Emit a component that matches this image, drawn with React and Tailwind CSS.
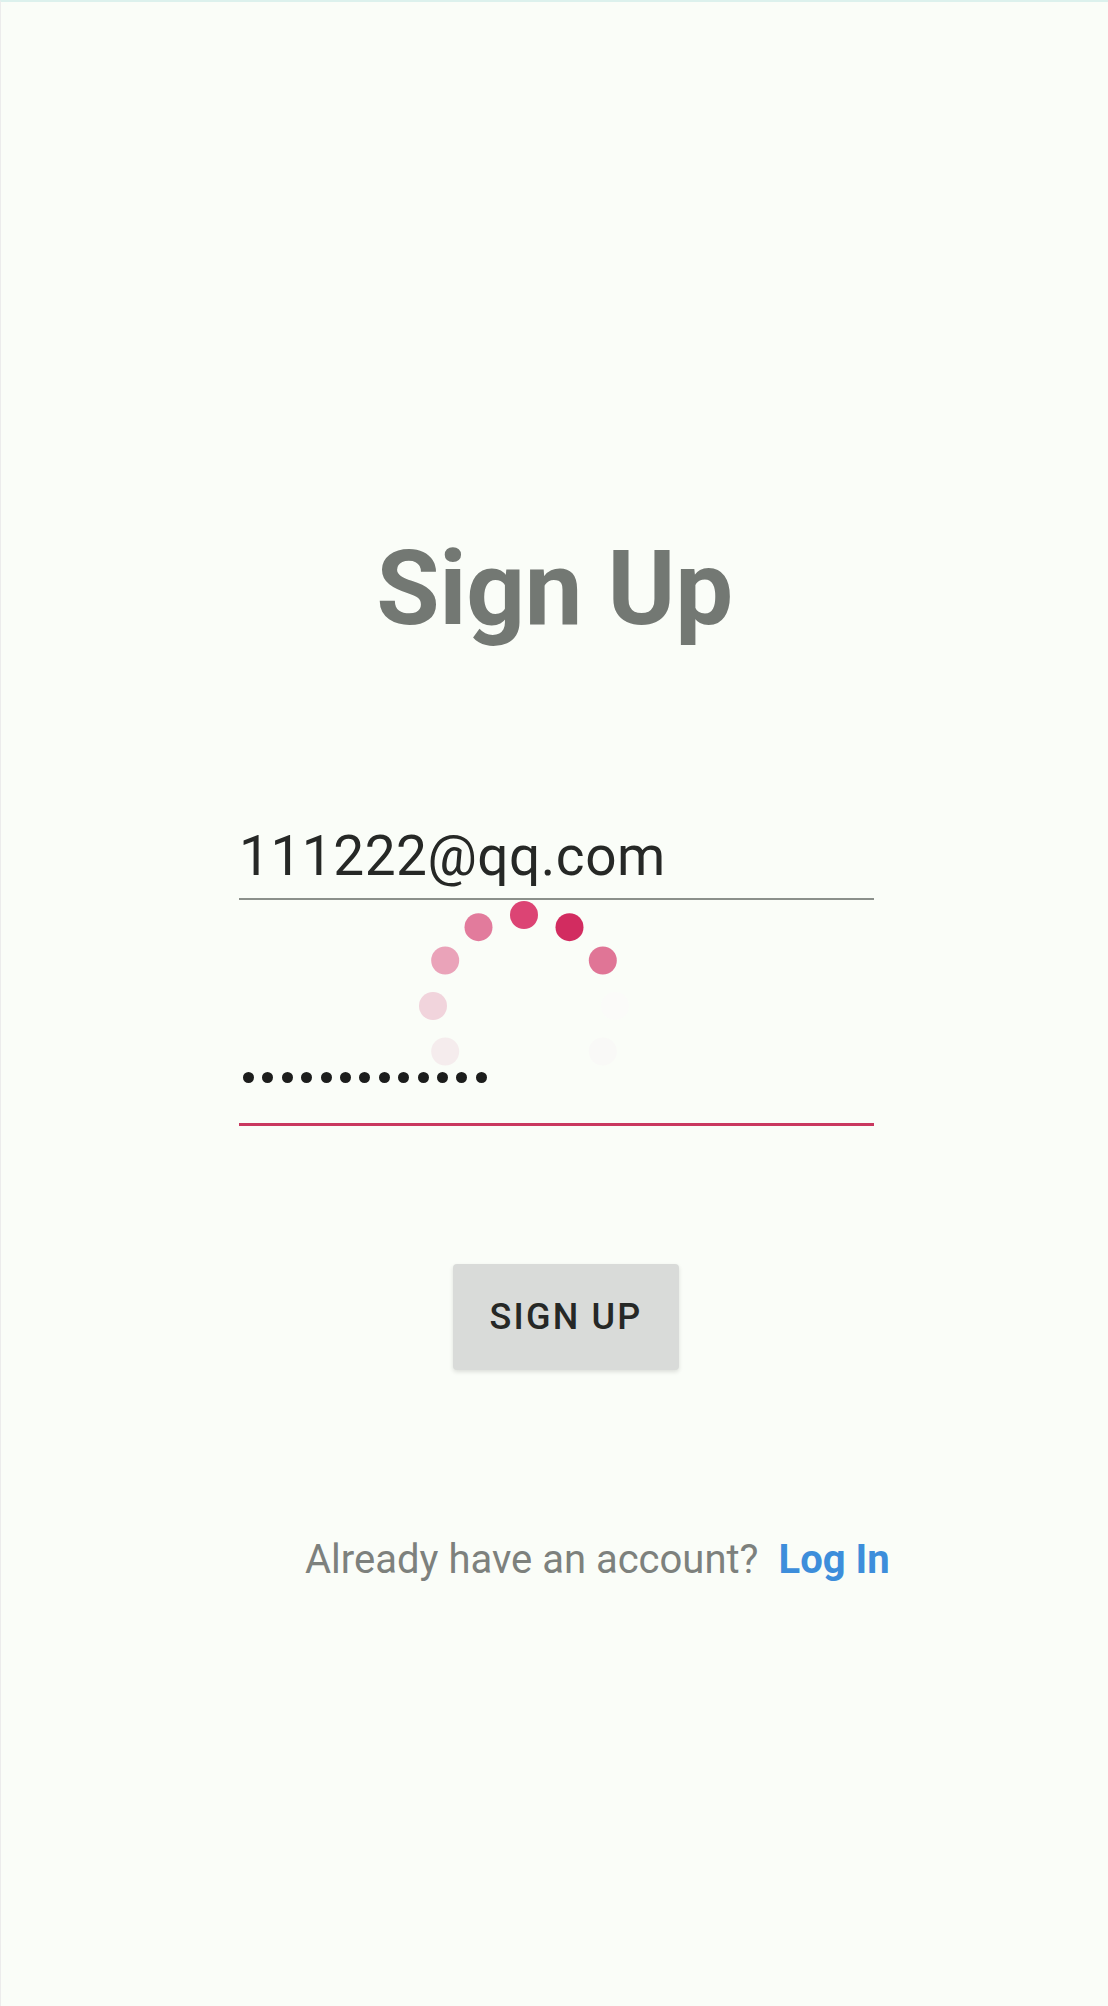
const spinnerDots = [
  { a: -120, c: "#f5eced" },
  { a: -90, c: "#f1d4dc" },
  { a: -60, c: "#eaa3b9" },
  { a: -30, c: "#e27b9c" },
  { a: 0, c: "#dc4474" },
  { a: 30, c: "#d22c60" },
  { a: 60, c: "#e07596" },
  { a: 90, c: "#fbfbf9" },
  { a: 120, c: "#f9f9f7" },
];

const Spinner = () => (
  <svg className="absolute left-[413px] top-[894px]" width="220" height="220" viewBox="0 0 220 220">
    {spinnerDots.map((d) => {
      const r = (d.a * Math.PI) / 180;
      return (
        <circle
          key={d.a}
          cx={110 + Math.sin(r) * 91}
          cy={110 - Math.cos(r) * 91}
          r="14"
          fill={d.c}
        />
      );
    })}
  </svg>
);

const App = () => {
  return (
    <div
      className="relative min-h-[2006px] w-[1108px] bg-[#fafdf8] border-t-2 border-t-[#dcf1ed] border-l border-l-[#ececec] overflow-hidden"
      style={{ fontFamily: "Roboto, 'Noto Sans', sans-serif" }}
    >
      <div className="flex flex-col pt-[535px]">
        {/* Title */}
        <h1 className="text-center text-[103px] leading-none font-bold text-[#737873] tracking-[-0.3px]">
          Sign Up
        </h1>

        {/* Email */}
        <div className="ml-[238px] w-[635px] mt-[189px]">
          <div className="text-[55px] leading-none text-[#262826] tracking-[0.5px]">
            111222@qq.com
          </div>
          <div className="mt-[14px] h-[2px] bg-[#8b908b]" />
        </div>

        {/* Password */}
        <div className="ml-[238px] w-[635px] mt-[172px]">
          <div className="flex gap-[8.4px] pl-[4px] h-[11px]">
            {Array.from({ length: 13 }).map((_, i) => (
              <span key={i} className="w-[11px] h-[11px] rounded-full bg-[#1c1d1c]" />
            ))}
          </div>
          <div className="mt-[40px] h-[3px] bg-[#c9385f]" />
        </div>

        {/* Button */}
        <button className="ml-[452px] mt-[138px] w-[226px] h-[106px] rounded-[4px] bg-[#d9dbd9] shadow-[0_2px_4px_rgba(0,0,0,0.12)] text-[36px] font-medium tracking-[2.2px] text-[#262826]">
          SIGN UP
        </button>

        {/* Login link */}
        <div className="ml-[304px] mt-[170px] flex items-baseline text-[40px] leading-none">
          <span className="text-[#7d817d]">Already have an account?</span>
          <span className="ml-[20px] font-bold text-[#3d8edb]">Log In</span>
        </div>
      </div>

      <Spinner />
    </div>
  );
};

export default App;
